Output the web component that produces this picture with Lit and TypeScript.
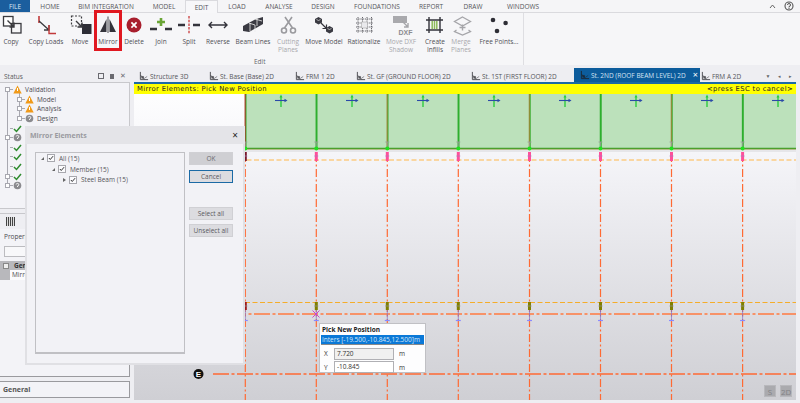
import { LitElement, html, css, svg } from "lit";
import { customElement } from "lit/decorators.js";

const D = "#3a3a3e";
const icons: Record<string, any> = {
  copy: svg`<rect x="4.500" y="3.500" width="9.500" height="9.500" fill="#fff" stroke="${D}" stroke-width="1.300"/><rect x="12.500" y="10.500" width="9.500" height="9.500" fill="none" stroke="${D}" stroke-width="1.300"/><path d="M8.500 7.500l6 6M15 9.500v4.500h-4.500" fill="none" stroke="${D}" stroke-width="1.400"/>`,
  loads: svg`<path d="M5 3v7" stroke="#c23a3a" stroke-width="1.600"/><path d="M5 8l10 9M15 12v5h-5" fill="none" stroke="${D}" stroke-width="1.300"/><path d="M15 12v8.500h7" fill="none" stroke="#c23a3a" stroke-width="1.400"/>`,
  move: svg`<rect x="3.500" y="3" width="10" height="10" fill="none" stroke="${D}" stroke-width="1.200" stroke-dasharray="2 1.500"/><rect x="14" y="11" width="9.500" height="10" fill="#2e2e36"/><path d="M8 8l6 6M14 9.500V14H9.500" fill="none" stroke="${D}" stroke-width="1.400"/>`,
  mirror: svg`<path d="M10.500 6v13H4zM13.500 6v13H20z" fill="#33333b"/><path d="M12 3.500v16.500" stroke="#33333b" stroke-width=".9"/>`,
  del: svg`<circle cx="12" cy="12" r="7.500" fill="#a81e2d"/><path d="M9.400 9.400l5.200 5.200M14.600 9.400l-5.200 5.200" stroke="#fff" stroke-width="1.700"/>`,
  join: svg`<path d="M1 16h7M16 16h7" stroke="#33333b" stroke-width="2.600"/><path d="M12 5v8M8 9h8" stroke="#6aa536" stroke-width="2.600"/>`,
  split: svg`<path d="M1 12h7M16 12h7" stroke="#33333b" stroke-width="2.500"/><path d="M12 3v18" stroke="#c93a3a" stroke-width="1.300" stroke-dasharray="2.500 1.200"/>`,
  reverse: svg`<path d="M3 12h18M6 9l-3 3 3 3M18 9l3 3-3 3" fill="none" stroke="#33333b" stroke-width="1.400"/>`,
  beam: svg`<path d="M2 13l13-7 7-2v7l-14 8-6-1z" fill="#3a3a42"/><path d="M8 10l6 2v7M14 6l7 2M9 10v8M16 5v8" stroke="#eee" stroke-width=".8" fill="none"/>`,
  cut: svg`<path d="M9 4l7.500 11M16 4L8.500 15" stroke="#9a9a9e" stroke-width="1.600"/><circle cx="8" cy="17.500" r="2.500" fill="none" stroke="#9a9a9e" stroke-width="1.600"/><circle cx="17" cy="17.500" r="2.500" fill="none" stroke="#9a9a9e" stroke-width="1.600"/>`,
  mmodel: svg`<path d="M6.500 4l3.500 2v3.500l-3.500 2-3.500-2V6z" fill="#3a3a42"/><path d="M17.500 13l3.500 2v3.500l-3.500 2-3.500-2V15z" fill="#3a3a42"/><path d="M9 10l5.500 5.500M14.500 11.500v4h-4" fill="none" stroke="#33333b" stroke-width="1.200"/><path d="M4.500 6.500l2 1 2-1M15.500 15.500l2 1 2-1" stroke="#ddd" stroke-width=".7" fill="none"/>`,
  rational: svg`<path d="M4 6h17M4 10h17M4 14h17M4 18h17M6 4v16M10.500 4v16M15 4v16M19.500 4v16" stroke="#55555b" stroke-width=".9" stroke-dasharray="1.300 .9"/><path d="M9.500 9h6v6h-6z" fill="#e9e9ec" stroke="#aaa" stroke-width=".6"/>`,
  dxf: svg`<rect x="4" y="3" width="14" height="7" fill="#a9a9ad"/><path d="M13 8l6 6M19 10v4h-4" fill="none" stroke="#a5a5a9" stroke-width="1.400"/><text x="9.500" y="22" font-family="Liberation Sans, sans-serif" font-weight="700" font-size="7" fill="#8c8c90">DXF</text>`,
  infills: svg`<path d="M6 4v16M17 4v16M3 7h17M3 17h17" stroke="#33333b" stroke-width="1.400"/><path d="M9.200 8v8M11.500 8v8M13.800 8v8" stroke="#8dbb5a" stroke-width="1.500"/>`,
  merge: svg`<path d="M13.500 4l8 4.500-8 4.500-8-4.500z" fill="none" stroke="#a5a5a9" stroke-width="1.300"/><path d="M13.500 11.500v6M10.500 14.500h6" stroke="#a5a5a9" stroke-width="1.400"/><path d="M7.500 17l-2 1.500 8 3.500 8-3.500-2-1.500" fill="none" stroke="#a5a5a9" stroke-width="1.300"/>`,
  points: svg`<circle cx="6" cy="7" r="2.300" fill="#2e2e36"/><circle cx="18.600" cy="10" r="2.300" fill="#2e2e36"/><circle cx="10" cy="18" r="2.300" fill="#2e2e36"/>`,
};

const ribbon = [
  { w: 22, i: "copy", t: ["Copy"] },
  { w: 48, i: "loads", t: ["Copy Loads"] },
  { w: 20, i: "move", t: ["Move"] },
  { w: 36, i: "mirror", t: ["Mirror"] },
  { w: 16, i: "del", t: ["Delete"] },
  { w: 38, i: "join", t: ["Join"] },
  { w: 18, i: "split", t: ["Split"] },
  { w: 40, i: "reverse", t: ["Reverse"] },
  { w: 30, i: "beam", t: ["Beam Lines"] },
  { w: 40, i: "cut", t: ["Cutting", "Planes"], off: true },
  { w: 32, i: "mmodel", t: ["Move Model"] },
  { w: 48, i: "rational", t: ["Rationalize"] },
  { w: 26, i: "dxf", t: ["Move DXF", "Shadow"], off: true },
  { w: 42, i: "infills", t: ["Create", "Infills"] },
  { w: 10, i: "merge", t: ["Merge", "Planes"], off: true },
  { w: 66, i: "points", t: ["Free Points..."] },
];

const topTabs = [
  ["HOME", 5, 30], ["BIM INTEGRATION", 5, 72], ["MODEL", 8, 28], ["EDIT", 7, 33, "on"], ["LOAD", 6, 26],
  ["ANALYSE", 12, 34], ["DESIGN", 14, 26], ["FOUNDATIONS", 17, 48], ["REPORT", 16, 28], ["DRAW", 17, 22], ["WINDOWS", 22, 34],
] as const;

const docTabs = [
  { t: "Structure 3D", w: 70 },
  { t: "St. Base (Base) 2D", w: 86 },
  { t: "FRM 1 2D", w: 61 },
  { t: "St. GF (GROUND FLOOR) 2D", w: 115 },
  { t: "St. 1ST (FIRST FLOOR) 2D", w: 104 },
  { t: "St. 2ND (ROOF BEAM LEVEL) 2D", w: 126, on: true },
  { t: "FRM A 2D", w: 62 },
];

const cols = [245.3, 316.3, 387.3, 458.3, 529.5, 600.5, 671.5, 742.6];
const bays = [281, 352, 423, 494, 565, 636, 707, 778];

const tabGlyph = (c: string) => svg`<svg class="tg" viewBox="0 0 11 11"><path d="M1.500 1v8.500H10M1.500 4.500l5 5" fill="none" stroke="${c}" stroke-width="1.100"/><path d="M3 6h2v2H3zM6 8l3-2" fill="${c}" stroke="${c}" stroke-width=".7"/></svg>`;

const warn = html`<svg class="ti" viewBox="0 0 9 9"><path d="M4.500 .5L8.700 8.500H.3z" fill="#f09a1a"/><path d="M4.500 3v3" stroke="#fff" stroke-width="1"/></svg>`;
const ok = html`<svg class="ti" viewBox="0 0 9 9"><path d="M1 5l2.500 2.500L8 2" fill="none" stroke="#2e8b2e" stroke-width="1.500"/></svg>`;
const q = html`<svg class="ti" viewBox="0 0 9 9"><circle cx="4.500" cy="4.500" r="3.800" fill="#8a8a8e"/><path d="M3.200 3.500a1.300 1.300 0 1 1 1.300 1.500v1" fill="none" stroke="#fff" stroke-width=".9"/></svg>`;

const tree = [
  { l: 0, i: warn, t: "Validation", b: "m" },
  { l: 1, i: warn, t: "Model", b: "p" },
  { l: 1, i: warn, t: "Analysis", b: "p" },
  { l: 1, i: q, t: "Design", b: "p" },
  { l: 0, i: ok, t: "" },
  { l: 0, i: q, t: "", b: "p" },
  { l: 0, i: ok, t: "" },
  { l: 0, i: ok, t: "" },
  { l: 0, i: ok, t: "" },
  { l: 0, i: ok, t: "", b: "p" },
  { l: 0, i: q, t: "", b: "p" },
];

const dlgTree = [
  { l: 0, t: "All (15)", a: "open" },
  { l: 1, t: "Member (15)", a: "open" },
  { l: 2, t: "Steel Beam (15)", a: "closed" },
];

function canvas() {
  const V = "#ff6a33";
  return svg`<svg class="cv" viewBox="134 84 662 316" preserveAspectRatio="none">
    <defs>
      <linearGradient id="bg" x1="0" y1="0" x2="0" y2="1">
        <stop offset="0" stop-color="#ffffff"/><stop offset=".12" stop-color="#fafafc"/><stop offset=".3" stop-color="#f1f1f5"/><stop offset="1" stop-color="#cfcfd4"/>
      </linearGradient>
    </defs>
    <rect x="134" y="84" width="662" height="316" fill="url(#bg)"/>
    <rect x="245" y="94" width="551" height="54" fill="#bce1bb"/>
    <rect x="244" y="150" width="552" height="2" fill="#dfdfe3" opacity=".7"/>
    ${cols.map((x) => svg`<path d="M${x} 154V400" stroke="${V}" stroke-width="1.200" stroke-dasharray="8 2.500 2 2.500"/>`)}
    <path d="M134 160H796" stroke="#ffb84a" stroke-width="1" stroke-dasharray="5 2.500"/>
    <path d="M245 302.500H796" stroke="#f5ad2a" stroke-width="1" stroke-dasharray="5 2.500"/>
    <path d="M134 314H796" stroke="#ff7a40" stroke-width="1.300" stroke-dasharray="16 2.500 3 2.500"/>
    <path d="M213 374H796" stroke="${V}" stroke-width="1.300" stroke-dasharray="16 2.500 3 2.500"/>
    ${cols.map((x, i) => svg`
      <path d="M${x} 94V148" stroke="${i === 0 ? "#b23a2a" : i % 2 ? "#2fae2f" : "#a08a3a"}" stroke-width="1.500"/>
      <path d="M${x + 0.8} 94V148" stroke="#2fae2f" stroke-width=".8"/>
      <path d="M${x - 2} 142h4M${x} 142v5" stroke="#9a9a9a" stroke-width=".8"/>
      <path d="M${x} 152v9" stroke="${i === 0 ? "#7a1a2a" : "#ff4f9a"}" stroke-width="3"/>
      <path d="M${x - 2} 156h4" stroke="#a080c0" stroke-width=".7"/>
      <path d="M${x} 302v8" stroke="${i === 0 ? "#a01a1a" : "#808000"}" stroke-width="3"/>
      <path d="M${x - 2} 306h4" stroke="#8a8a8a" stroke-width=".8"/>
      <path d="M${x} 310v10" stroke="#7a70d0" stroke-width=".7"/>
      <path d="M${x - 2.500} 320.500h5" stroke="#8a8aff" stroke-width="1.200"/>
    `)}
    <path d="M245 148.500H796" stroke="#3aa52a" stroke-width="1.400"/>
    <path d="M245 149.200H796" stroke="#a08a3a" stroke-width=".6"/>
    ${cols.map((x) => svg`<circle cx="${x}" cy="148.500" r="2" fill="#1fe01f"/>`)}
    ${bays.map((x) => svg`
      <path d="M${x} 96V107" stroke="#2ecc40" stroke-width="1.400"/>
      <path d="M${x - 6} 100.500H${x + 5}" stroke="#2b4aa8" stroke-width="1.100"/>
      <path d="M${x - 1.500} 97.500l1.500-3 1.500 3z" fill="#2ecc40"/>
      <path d="M${x + 6.500} 100.500l-3-1.700v3.400z" fill="#2b4aa8"/>
    `)}
    <path d="M312.500 310.500l7 7M319.500 310.500l-7 7" stroke="#cc44cc" stroke-width="1"/>
    <circle cx="198.500" cy="374" r="5" fill="#111"/>
    <text x="198.500" y="377" text-anchor="middle" font-family="Liberation Sans, sans-serif" font-weight="700" font-size="8" fill="#fff">E</text>
  </svg>`;
}

@customElement("app-root")
export class AppRoot extends LitElement {
  static styles = css`
    :host { display: block; position: relative; width: 800px; height: 403px; overflow: hidden; background: #eeeef2;
      font-family: "Open Sans", "Liberation Sans", sans-serif; font-size: 6.500px; color: #4a4a50; }
    .menubar { display: flex; height: 13px; background: #f5f5f7; border-bottom: 1px solid #dadade; box-sizing: border-box; align-items: stretch; }
    .file { width: 30px; background: #1b5e9e; color: #dfe9f3; display: flex; align-items: center; justify-content: center; }
    .mt { display: flex; align-items: center; justify-content: center; white-space: nowrap; box-sizing: border-box; color: #55555a; }
    .mt.on { background: #f7f7f9; border: 1px solid #dadade; border-bottom: none; height: 13px; }
    .mright { margin-left: auto; display: flex; align-items: center; gap: 8px; padding-right: 6px; }
    .ribbon { display: flex; height: 52px; background: #f6f6f8; position: relative; }
    .group { display: flex; width: 524px; height: 52px; position: relative; border-right: 1px solid #dedee2; box-sizing: border-box; }
    .ri { display: flex; flex-direction: column; align-items: center; min-width: 0; box-sizing: border-box; flex: none; position: relative; }
    .ri svg { width: 24px; height: 24px; flex: none; }
    .ri .lb { margin-top: 1px; line-height: 8px; white-space: nowrap; text-align: center; color: #505056; }
    .ri.off .lb { color: #a8a8ac; }
    .redbox { position: absolute; left: 94px; top: -3px; width: 28px; height: 41px; border: 3px solid #e01820; box-sizing: border-box; }
    .gname { position: absolute; left: 254px; top: 45px; color: #66666c; line-height: 8px; }
    .gap5 { height: 5px; background: #eeeef2; }
    .body { display: flex; height: 333px; }
    .left { width: 130px; flex: none; display: flex; flex-direction: column; }
    .sthead { height: 12px; display: flex; align-items: center; padding: 0 4px; justify-content: space-between; color: #5a5a60; }
    .sticons { display: flex; gap: 6px; color: #6a6a70; align-items: center; line-height: 8px; }
    .pin { width: 4px; height: 5px; background: #6a6a70; }
    .box { width: 4px; height: 4px; border: 1px solid #6a6a70; }
    .stree { height: 127px; box-sizing: border-box; border: 1px solid #c8c8cc; border-left: none; padding-top: 2px; overflow: hidden;
      background-color: #f3f3f7;
      background-image: linear-gradient(#a8a8b0, #a8a8b0), linear-gradient(#a8a8b0, #a8a8b0);
      background-size: 1px 97px, 1px 28px; background-position: 7px 6px, 19px 8px; background-repeat: no-repeat; }
    .row { display: flex; align-items: center; height: 9.600px; white-space: nowrap; }
    .tog { width: 5px; height: 5px; flex: none; border: 1px solid #a8a8b0; box-sizing: border-box; background: #fff; }
    .nob { width: 5px; flex: none; }
    .dash { width: 3px; height: 1px; background: #a8a8b0; flex: none; }
    .ti { width: 9px; height: 9px; flex: none; margin-right: 3px; }
    .lstrip { height: 16px; margin-top: 4px; border-top: 1px solid #c8c8cc; background: #eeeef2; box-sizing: border-box; padding: 3px 6px; display: flex; align-items: center; }
    .flag { width: 9px; height: 9px; background: repeating-linear-gradient(90deg, #444 0 1px, #ddd 1px 2px); }
    .props { flex: 1; border: 1px solid #9a9a9e; border-top: none; border-left: none; background: #f3f3f7; display: flex; flex-direction: column; }
    .ptitle { height: 15px; padding-left: 4px; display: flex; align-items: center; }
    .pinput { height: 11px; width: 40px; margin: 2px 0 4px 4px; border: 1px solid #bcbcc0; background: #f8f8fa; box-sizing: border-box; }
    .gen { height: 9px; background: #b8b8bc; display: flex; align-items: center; gap: 5px; padding-left: 3px; font-weight: 700; color: #333; }
    .gen i { width: 4px; height: 4px; background: #eee; border: .5px solid #888; }
    .mir { height: 10px; background: #b8b8bc; padding-left: 10px; display: flex; }
    .mir span { background: #fbfbfd; flex: 1; line-height: 10px; padding-left: 2px; }
    .general { height: 17px; margin: 4px 0 5px; border: 1px solid #9a9a9e; border-left: none; box-sizing: border-box; background: #f3f3f7; font-weight: 700; display: flex; align-items: center; padding-left: 3px; color: #555; font-size: 7px; }
    .right { flex: 1; min-width: 0; margin-left: 4px; display: flex; flex-direction: column; }
    .tabs { height: 12px; display: flex; align-items: stretch; white-space: nowrap; position: relative; padding-left: 4px; }
    .dt { display: flex; align-items: center; flex: none; box-sizing: border-box; padding-left: 1px; gap: 1px; color: #55555a; }
    .dt.on { background: #0c5c9c; color: #d5e4f2; padding-left: 6px; position: relative; height: 14px; margin-top: -2px; }
    .tg { width: 10px; height: 10px; flex: none; }
    .tx { position: absolute; right: 2px; top: 1px; font-size: 9px; line-height: 12px; color: #fff; }
    .tabnav { margin-left: auto; display: flex; gap: 6px; align-items: center; padding-right: 7.500px; font-size: 5px; color: #666; }
    .tabnav span { width: 5px; text-align: center; }
    .stage { flex: 1; border-top: 2px solid #1b6aa5; position: relative; margin-right: 4px; margin-bottom: 3px; min-height: 0; }
    .cv { display: block; position: absolute; inset: 0; width: 100%; height: 100%; }
    .hint { position: relative; height: 10px; background: #ffff00; display: flex; justify-content: space-between; align-items: center; padding: 0 3px; color: #222; font-family: "DejaVu Sans", sans-serif; font-size: 6.800px; letter-spacing: .37px; white-space: nowrap; }
    .vbtn { position: absolute; top: 301px; width: 12px; height: 12px; background: #aaaaae; color: #828286; font-size: 8px; line-height: 11px; text-align: center; border: 1px solid #b8b8bc; box-sizing: border-box; }
    .vbtn.s { right: 20px; }
    .vbtn.d { right: 4px; }
    .dlg { position: absolute; left: 25px; top: 126px; width: 220px; height: 239px; background: #f2f2f6; border: 2px solid #e0e0e4; border-top: none; box-sizing: border-box; display: flex; flex-direction: column; }
    .dhead { height: 18px; background: #e4e4e8; margin: 0 -2px; display: flex; align-items: center; justify-content: space-between; padding: 0 7px 0 5px; font-weight: 700; color: #9a9aa0; font-size: 7px; flex: none; }
    .dx { color: #222; font-size: 10px; line-height: 10px; font-weight: 400; }
    .dbody { flex: 1; display: flex; padding: 8px 0 9px 8px; gap: 4px; min-height: 0; }
    .dtree { width: 150px; border: 1px solid #c0c0c4; border-width: 1px 1px 2px 1px; box-sizing: border-box; padding: 0 0 0 5px; }
    .dr { display: flex; align-items: center; height: 10.700px; gap: 2px; white-space: nowrap; font-size: 6.500px; color: #55555a; }
    .arrow { width: 0; height: 0; flex: none; margin-right: 1px; }
    .arrow.open { border-left: 3px solid transparent; border-bottom: 3px solid #666; }
    .arrow.closed { border-left: 3px solid #666; border-top: 2px solid transparent; border-bottom: 2px solid transparent; }
    .ck { width: 8px; height: 8px; border: 1px solid #a8a8ae; box-sizing: border-box; background: #fbfbfd; flex: none; display: flex; margin-right: 2px; }
    .ck svg { width: 100%; height: 100%; }
    .dbtns { width: 44px; display: flex; flex-direction: column; flex: none; }
    .btn { height: 13px; box-sizing: border-box; background: #dcdce0; border: 1px solid #d0d0d4; display: flex; align-items: center; justify-content: center; color: #5a5a60; white-space: nowrap; }
    .btn.plain { background: #cfcfd3; color: #6a6a70; }
    .btn.focus { border: 1px solid #1b6aa5; margin-top: 5px; }
    .btn.sa { margin-top: 24px; }
    .btn.ua { margin-top: 4px; }
    .pick { position: absolute; left: 319px; top: 323px; width: 107px; height: 50px; background: #fdfdfe; border: 1px solid #c0c0c4; box-sizing: border-box; padding: 1px 1px 0 1px; color: #333; }
    .ph { height: 10px; font-weight: 700; color: #222; line-height: 10px; padding-left: 1px; }
    .ps { height: 9px; background: #0a78d7; color: #d8e8fa; line-height: 9px; padding-left: 1px; margin: 0 0 2px; white-space: nowrap; overflow: hidden; border-bottom: 1px solid #888; }
    .pr { display: flex; align-items: center; height: 13.500px; padding-left: 3px; gap: 5px; }
    .pr b { font-weight: 400; width: 5px; }
    .pv { width: 60px; height: 12px; border: 1px solid #b0b0b4; box-sizing: border-box; padding-left: 2px; line-height: 10px; background: #f0f0f0; }
    .pv.w { background: #fff; }
  `;

  render() {
    return html`
      <div class="menubar">
        <div class="file">FILE</div>
        ${topTabs.map(([t, m, w, on]) => html`<div class="mt ${on || ""}" style="margin-left:${m}px;width:${w}px">${t}</div>`)}
        <div class="mright"><svg width="7" height="5" viewBox="0 0 7 5"><path d="M1 4l2.500-3L6 4" fill="none" stroke="#666"/></svg><svg width="10" height="10" viewBox="0 0 10 10"><circle cx="5" cy="5" r="4" fill="none" stroke="#555" stroke-width="1.100"/><path d="M3.500 4a1.500 1.500 0 1 1 1.500 1.500V6.500M5 7v1" fill="none" stroke="#555"/></svg></div>
      </div>
      <div class="ribbon">
        <div class="group">
          ${ribbon.map((r) => html`<div class="ri ${r.off ? "off" : ""}" style="width:${r.w}px">
            <svg viewBox="0 0 24 24">${icons[r.i]}</svg>
            <div class="lb">${r.t.map((l) => html`<div>${l}</div>`)}</div>
          </div>`)}
          <div class="redbox"></div>
          <div class="gname">Edit</div>
        </div>
      </div>
      <div class="gap5"></div>
      <div class="body">
        <div class="left">
          <div class="sthead"><span>Status</span><span class="sticons"><i class="box"></i><i class="pin"></i><span>✕</span></span></div>
          <div class="stree">
            ${tree.map((n) => html`<div class="row" style="padding-left:${5 + n.l * 12}px">
              ${n.b ? html`<i class="tog"></i>` : html`<i class="nob"></i>`}<i class="dash"></i>${n.i}${n.t ? html`<span>${n.t}</span>` : ""}
            </div>`)}
          </div>
          <div class="lstrip"><i class="flag"></i></div>
          <div class="props">
            <div class="ptitle">Properties</div>
            <div class="pinput"></div>
            <div class="gen"><i></i>General</div>
            <div class="mir"><span>Mirror</span></div>
          </div>
          <div class="general">General</div>
        </div>
        <div class="right">
          <div class="tabs">
            ${docTabs.map((d) => html`<div class="dt ${d.on ? "on" : ""}" style="width:${d.w}px">
              ${tabGlyph(d.on ? "#1b2b3b" : "#55555a")}<span>${d.t}</span>${d.on ? html`<span class="tx">×</span>` : ""}
            </div>`)}
            <div class="tabnav"><span>▼</span><span>◂</span><span>▸</span></div>
          </div>
          <div class="stage">
            ${canvas()}
            <div class="hint"><span>Mirror Elements: Pick New Position</span><span>&lt;press ESC to cancel&gt;</span></div>
            <div class="vbtn s">S</div><div class="vbtn d">2D</div>
          </div>
        </div>
      </div>
      <div class="dlg">
        <div class="dhead"><span>Mirror Elements</span><span class="dx">×</span></div>
        <div class="dbody">
          <div class="dtree">
            ${dlgTree.map((n) => html`<div class="dr" style="padding-left:${n.l * 11}px">
              <i class="arrow ${n.a}"></i>
              <span class="ck"><svg viewBox="0 0 8 8"><path d="M1.200 4l1.800 2L6.800 1.500" fill="none" stroke="#222" stroke-width="1.200"/></svg></span>
              <span>${n.t}</span>
            </div>`)}
          </div>
          <div class="dbtns">
            <div class="btn plain">OK</div>
            <div class="btn focus">Cancel</div>
            <div class="btn sa">Select all</div>
            <div class="btn ua">Unselect all</div>
          </div>
        </div>
      </div>
      <div class="pick">
        <div class="ph">Pick New Position</div>
        <div class="ps">Inters [-19.500,-10.845,12.500]m</div>
        <div class="pr"><b>X</b><div class="pv">7.720</div><span>m</span></div>
        <div class="pr"><b>Y</b><div class="pv w">-10.845</div><span>m</span></div>
      </div>
    `;
  }
}
